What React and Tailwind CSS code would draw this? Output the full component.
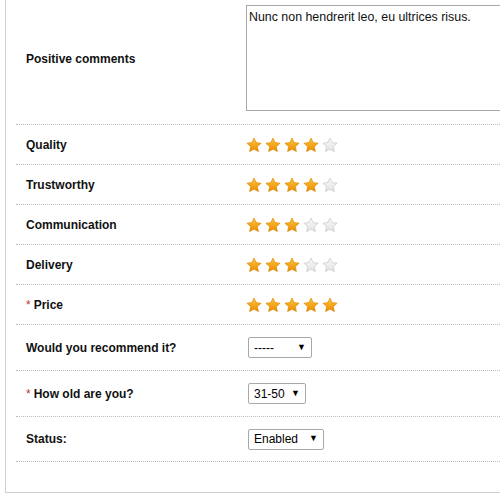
function Star({ on }) {
  return (
    <svg width="16" height="16" viewBox="0 0 24 24" className="shrink-0">
      <defs>
        <linearGradient id="gold" x1="0" y1="0" x2="0" y2="1">
          <stop offset="0" stopColor="#ffc83a" />
          <stop offset="1" stopColor="#e98a00" />
        </linearGradient>
        <linearGradient id="grey" x1="0" y1="0" x2="0" y2="1">
          <stop offset="0" stopColor="#fafafa" />
          <stop offset="1" stopColor="#e2e2e2" />
        </linearGradient>
      </defs>
      <path
        d="M12 1.5l3.2 6.9 7.5.9-5.6 5.2 1.5 7.4L12 18.2l-6.6 3.7 1.5-7.4L1.3 9.3l7.5-.9z"
        fill={on ? 'url(#gold)' : 'url(#grey)'}
        stroke={on ? '#d98a0c' : '#c4c4c4'}
        strokeWidth="1"
        strokeLinejoin="round"
      />
    </svg>
  )
}

function Stars({ n }) {
  return (
    <div className="flex gap-[3px]">
      {[1, 2, 3, 4, 5].map((i) => <Star key={i} on={i <= n} />)}
    </div>
  )
}

function Select({ value, w }) {
  return (
    <div className={`ml-[2px] h-[21px] border border-[#a9a9a9] rounded-[2px] flex items-center justify-between pl-[5px] pr-[5px] text-[12px] text-black ${w}`}>
      <span>{value}</span>
      <span className="text-[9px]">▼</span>
    </div>
  )
}

function Label({ text, req, extra = '' }) {
  return (
    <div className={`w-[230px] shrink-0 pl-[10px] text-[12px] font-bold text-[#111] ${extra}`}>
      {req && <span className="text-[#c0392b] font-normal mr-[3px]">*</span>}
      {text}
    </div>
  )
}

const ratings = [
  { label: 'Quality', n: 4 },
  { label: 'Trustworthy', n: 4 },
  { label: 'Communication', n: 3 },
  { label: 'Delivery', n: 3 },
  { label: 'Price', n: 5, req: true },
]

export default function App() {
  return (
    <div className="w-[500px] h-[500px] bg-white overflow-hidden font-['Liberation_Sans',Arial,sans-serif]">
      <div className="ml-[5px] h-[493px] border-l border-b border-[#cfcfcf] pl-[10px] pb-[30px]">

        {/* Comments */}
        <div className="flex items-center h-[125px] pt-[5px] pb-[14px] border-b border-dotted border-[#bdbdbd]">
          <Label text="Positive comments" extra="mt-[3px]" />
          <div className="w-[270px] h-[106px] shrink-0 border border-[#a9a9a9] px-[2px] pt-[2px] text-[12.4px] text-[#111]">
            Nunc non hendrerit leo, eu ultrices risus.
          </div>
        </div>

        {/* Ratings */}
        {ratings.map((r) => (
          <div key={r.label} className="flex items-center h-[40px] border-b border-dotted border-[#bdbdbd]">
            <Label text={r.label} req={r.req} />
            <Stars n={r.n} />
          </div>
        ))}

        {/* Selects */}
        <div className="flex items-center h-[46px] border-b border-dotted border-[#bdbdbd]">
          <Label text="Would you recommend it?" />
          <Select value="-----" w="w-[64px]" />
        </div>
        <div className="flex items-center h-[46px] border-b border-dotted border-[#bdbdbd]">
          <Label text="How old are you?" req />
          <Select value="31-50" w="w-[58px]" />
        </div>
        <div className="flex items-center h-[45px] border-b border-dotted border-[#bdbdbd]">
          <Label text="Status:" />
          <Select value="Enabled" w="w-[76px]" />
        </div>

      </div>
    </div>
  )
}
